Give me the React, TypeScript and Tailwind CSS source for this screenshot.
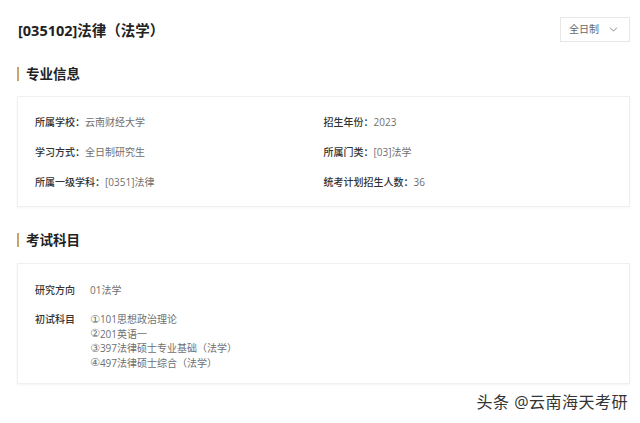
import { ChevronDown } from "lucide-react";

const font = { fontFamily: '"Open Sans", "Noto Sans CJK SC", sans-serif' };
const circled = { fontFamily: '"DejaVu Sans", "Noto Sans CJK SC", sans-serif' };

const info = [
  ["所属学校", "云南财经大学", "招生年份", "2023"],
  ["学习方式", "全日制研究生", "所属门类", "[03]法学"],
  ["所属一级学科", "[0351]法律", "统考计划招生人数", "36"],
];

const exams = [
  ["①", "101思想政治理论"],
  ["②", "201英语一"],
  ["③", "397法律硕士专业基础（法学）"],
  ["④", "497法律硕士综合（法学）"],
];

function SectionTitle({ title }: { title: string }) {
  return (
    <div className="flex items-center gap-[7px] h-[14px]">
      <span className="w-[2px] h-[14px] bg-[#c9a56f]"></span>
      <h3 className="text-[13.5px] leading-[14px] font-bold text-[#222]">{title}</h3>
    </div>
  );
}

export default function App() {
  return (
    <div className="relative h-[423px] bg-white pt-[17px] pl-[17px] pr-[10px] overflow-hidden" style={font}>
      {/* header */}
      <div className="flex items-center justify-between h-[25px]">
        <h2 className="text-[14.5px] leading-[20px] font-bold text-[#222] pl-px mt-[3px]">[035102]法律（法学）</h2>
        <div className="w-[70px] h-[25px] border border-[#e6e6e6] flex items-center justify-between pl-[8px] pr-[9px]">
          <span className="text-[10px] text-[#666]">全日制</span>
          <ChevronDown size={13} strokeWidth={1.3} className="text-[#555]" />
        </div>
      </div>

      {/* 专业信息 */}
      <div className="mt-[25px]">
        <SectionTitle title="专业信息" />
      </div>
      <div className="mt-[15px] border border-[#efefef] shadow-[0_1px_2px_rgba(0,0,0,0.04)] px-[17px] pt-[10px] pb-[9px] grid grid-cols-2">
        {info.map(([l1, v1, l2, v2]) => (
          <div key={l1} className="contents">
            <div className="h-[30px] flex items-center text-[10px]">
              <span className="text-[#333] font-medium">{l1}：</span>
              <span className="text-[#6f6f6f]">{v1}</span>
            </div>
            <div className="h-[30px] flex items-center text-[10px]">
              <span className="text-[#333] font-medium">{l2}：</span>
              <span className="text-[#6f6f6f]">{v2}</span>
            </div>
          </div>
        ))}
      </div>

      {/* 考试科目 */}
      <div className="mt-[26px]">
        <SectionTitle title="考试科目" />
      </div>
      <div className="mt-[16px] border border-[#efefef] shadow-[0_1px_2px_rgba(0,0,0,0.05)] px-[17px] pt-[18px] pb-[13px] text-[10px]">
        <div className="flex h-[16px] items-center">
          <span className="w-[55px] text-[#333] font-medium">研究方向</span>
          <span className="text-[#6f6f6f]">01法学</span>
        </div>
        <div className="flex mt-[14px]">
          <span className="w-[55px] text-[#333] font-medium leading-[14.5px]">初试科目</span>
          <div className="flex flex-col text-[#6f6f6f]">
            {exams.map(([n, e]) => (
              <div key={e} className="h-[14.5px] flex items-center">
                <span style={circled} className="text-[11px] leading-none">{n}</span>
                <span className="leading-none">{e}</span>
              </div>
            ))}
          </div>
        </div>
      </div>

      {/* watermark */}
      <div
        className="absolute right-[12px] top-[392px] text-[16px] leading-[20px] text-[#333] tracking-[0.5px]"
        style={{ textShadow: "0 0 2px #fff, 1px 1px 1px #fff" }}
      >
        头条 @云南海天考研
      </div>
    </div>
  );
}
